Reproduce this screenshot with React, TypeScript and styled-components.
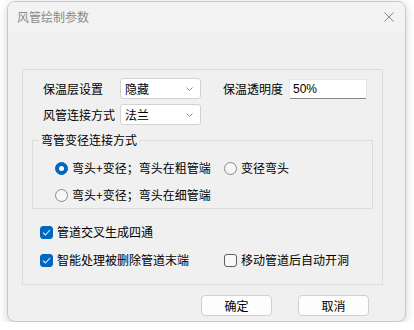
import React from 'react';
import styled, { createGlobalStyle } from 'styled-components';

const GlobalStyle = createGlobalStyle`
  html, body {
    margin: 0;
    padding: 0;
    background: #ffffff;
  }
  body {
    font-family: "Noto Sans CJK SC", "Noto Sans", sans-serif;
    font-size: 12px;
    color: #000;
  }
`;

const Window = styled.div`
  box-sizing: border-box;
  width: 399px;
  height: 321px;
  margin: 1px 0 0 7px;
  border: 1px solid #c9c9c9;
  border-radius: 8px;
  background: #f0f0f0;
  box-shadow: 0 2px 10px rgba(0, 0, 0, 0.18);
  overflow: hidden;
  display: flex;
  flex-direction: column;
`;

const TitleBar = styled.div`
  height: 30px;
  flex: none;
  background: #f3f3f3;
  display: flex;
  align-items: center;
  justify-content: space-between;
  padding: 0 8px 0 9px;
`;

const Title = styled.span`
  color: #8a8a8a;
  font-size: 12px;
  line-height: 16px;
`;

const CloseButton = styled.span`
  width: 16px;
  height: 16px;
  display: flex;
  align-items: center;
  justify-content: center;
`;

const Body = styled.div`
  padding: 37px 0 0 14px;
  display: flex;
  flex-direction: column;
`;

const OuterGroup = styled.div`
  box-sizing: border-box;
  width: 361px;
  height: 216px;
  border: 1px solid #dcdcdc;
  padding: 8px 9px 0 9px;
  display: flex;
  flex-direction: column;
`;

const FieldRow = styled.div<{ $top?: number }>`
  display: flex;
  align-items: center;
  height: 21px;
  margin-top: ${({ $top }) => $top ?? 0}px;
`;

const Label = styled.span<{ $w: number; $indent?: number }>`
  width: ${({ $w }) => $w}px;
  margin-left: ${({ $indent }) => $indent ?? 0}px;
  flex: none;
  line-height: 16px;
  white-space: nowrap;
`;

const SelectBox = styled.div`
  box-sizing: border-box;
  width: 81px;
  height: 21px;
  background: #fff;
  border: 1px solid #d2d2d2;
  border-radius: 3px;
  display: flex;
  align-items: center;
  justify-content: space-between;
  padding: 0 7px 0 4px;
  line-height: 16px;
`;

const TextInput = styled.div`
  box-sizing: border-box;
  width: 78px;
  height: 20px;
  background: #fff;
  border: 1px solid #e6e6e6;
  border-bottom: 1px solid #8a8a8a;
  border-radius: 2px;
  display: flex;
  align-items: center;
  padding-left: 3px;
  font-family: "Liberation Sans", "Noto Sans", sans-serif;
  font-size: 12px;
`;

const Fieldset = styled.fieldset`
  box-sizing: border-box;
  margin: 7px 0 0 0;
  width: 341px;
  border: 1px solid #dcdcdc;
  padding: 0;
  min-width: 0;
`;

const Legend = styled.legend`
  padding: 0 2px;
  margin-left: 6px;
  line-height: 16px;
`;

const FieldsetBody = styled.div`
  padding: 12px 0 5px 22px;
`;

const OptionRow = styled.div<{ $top?: number }>`
  display: flex;
  align-items: center;
  height: 16px;
  margin-top: ${({ $top }) => $top ?? 0}px;
`;

const Option = styled.label<{ $w?: number }>`
  display: flex;
  align-items: center;
  gap: 4px;
  width: ${({ $w }) => ($w ? `${$w}px` : 'auto')};
  flex: none;
  line-height: 16px;
  white-space: nowrap;
`;

const Radio = styled.span<{ $on?: boolean }>`
  box-sizing: border-box;
  width: 13px;
  height: 13px;
  border-radius: 50%;
  flex: none;
  border: 1px solid ${({ $on }) => ($on ? '#0067c0' : '#8a8a8a')};
  background: ${({ $on }) => ($on ? '#0067c0' : '#f6f6f6')};
  display: flex;
  align-items: center;
  justify-content: center;
  &::after {
    content: '';
    display: ${({ $on }) => ($on ? 'block' : 'none')};
    width: 5px;
    height: 5px;
    border-radius: 50%;
    background: #fff;
  }
`;

const Check = styled.span<{ $on?: boolean }>`
  box-sizing: border-box;
  width: 13px;
  height: 13px;
  border-radius: 3px;
  flex: none;
  border: 1px solid ${({ $on }) => ($on ? '#0067c0' : '#5c5c5c')};
  background: ${({ $on }) => ($on ? '#0067c0' : '#f8f8f8')};
  display: flex;
  align-items: center;
  justify-content: center;
`;

const CheckRow = styled.div<{ $top: number }>`
  display: flex;
  align-items: center;
  height: 16px;
  margin-top: ${({ $top }) => $top}px;
  padding-left: 8px;
`;

const ButtonBar = styled.div`
  width: 361px;
  display: flex;
  justify-content: flex-end;
  gap: 26px;
  margin-top: 10px;
  padding-right: 14px;
  box-sizing: border-box;
`;

const Button = styled.button`
  box-sizing: border-box;
  width: 71px;
  height: 21px;
  background: #fdfdfd;
  border: 1px solid #d0d0d0;
  border-radius: 4px;
  font-family: "Noto Sans CJK SC", sans-serif;
  font-size: 12px;
  line-height: 16px;
  color: #000;
  padding: 0;
`;

const Chevron = () => (
  <svg width="7" height="4" viewBox="0 0 7 4">
    <path d="M0.5 0.5 L3.5 3.5 L6.5 0.5" fill="none" stroke="#8a8a8a" strokeWidth="1" />
  </svg>
);

const Tick = () => (
  <svg width="9" height="7" viewBox="0 0 9 7">
    <path d="M1 3.6 L3.4 6 L8 1" fill="none" stroke="#eaf2fb" strokeWidth="1.1" />
  </svg>
);

export default function App() {
  return (
    <>
      <GlobalStyle />
      <Window>
        <TitleBar>
          <Title>风管绘制参数</Title>
          <CloseButton>
            <svg width="10" height="10" viewBox="0 0 10 10">
              <path d="M0.5 0.5 L9.5 9.5 M9.5 0.5 L0.5 9.5" stroke="#8a8a8a" strokeWidth="1" />
            </svg>
          </CloseButton>
        </TitleBar>
        <Body>
          <OuterGroup>
            <FieldRow>
              <Label $w={77} $indent={11}>保温层设置</Label>
              <SelectBox>
                <span>隐藏</span>
                <Chevron />
              </SelectBox>
              <Label $w={66} $indent={22}>保温透明度</Label>
              <TextInput>50%</TextInput>
            </FieldRow>
            <FieldRow $top={5}>
              <Label $w={77} $indent={11}>风管连接方式</Label>
              <SelectBox>
                <span>法兰</span>
                <Chevron />
              </SelectBox>
            </FieldRow>
            <Fieldset>
              <Legend>弯管变径连接方式</Legend>
              <FieldsetBody>
                <OptionRow>
                  <Option $w={169}>
                    <Radio $on />
                    弯头+变径；弯头在粗管端
                  </Option>
                  <Option>
                    <Radio />
                    变径弯头
                  </Option>
                </OptionRow>
                <OptionRow $top={11}>
                  <Option>
                    <Radio />
                    弯头+变径；弯头在细管端
                  </Option>
                </OptionRow>
              </FieldsetBody>
            </Fieldset>
            <CheckRow $top={15}>
              <Option>
                <Check $on>
                  <Tick />
                </Check>
                管道交叉生成四通
              </Option>
            </CheckRow>
            <CheckRow $top={12}>
              <Option $w={184}>
                <Check $on>
                  <Tick />
                </Check>
                智能处理被删除管道末端
              </Option>
              <Option>
                <Check />
                移动管道后自动开洞
              </Option>
            </CheckRow>
          </OuterGroup>
          <ButtonBar>
            <Button>确定</Button>
            <Button>取消</Button>
          </ButtonBar>
        </Body>
      </Window>
    </>
  );
}
